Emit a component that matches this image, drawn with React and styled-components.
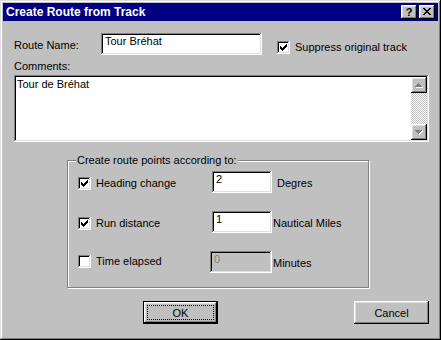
import React from 'react';
import styled, { createGlobalStyle } from 'styled-components';

const Global = createGlobalStyle`
  html, body {
    margin: 0;
    padding: 0;
    background: #c0c0c0;
  }
  * {
    box-sizing: border-box;
  }
`;

const raised = `
  background: #c0c0c0;
  box-shadow: inset -1px -1px #000, inset 1px 1px #fff, inset -2px -2px #808080, inset 2px 2px #dfdfdf;
`;

const sunken = `
  box-shadow: inset -1px -1px #fff, inset 1px 1px #808080, inset -2px -2px #dfdfdf, inset 2px 2px #000;
`;

const Window = styled.div`
  width: 441px;
  height: 340px;
  padding: 3px;
  display: flex;
  flex-direction: column;
  background: #c0c0c0;
  box-shadow: inset -1px -1px #000, inset 1px 1px #dfdfdf, inset -2px -2px #808080, inset 2px 2px #fff;
  font: 11px "Liberation Sans", Arial, sans-serif;
  color: #000;
`;

const TitleBar = styled.div`
  height: 18px;
  background: #000080;
  display: flex;
  align-items: center;
  justify-content: space-between;
  padding: 0 3px 0 3px;
`;

const Title = styled.div`
  color: #fff;
  font-weight: 700;
  font-size: 12px;
  line-height: 18px;
`;

const TitleButtons = styled.div`
  display: flex;
  gap: 2px;
`;

const TitleButton = styled.div`
  ${raised}
  width: 16px;
  height: 14px;
  display: flex;
  align-items: center;
  justify-content: center;
  font-weight: 700;
  font-size: 11px;
  line-height: 14px;
  padding-bottom: 1px;
`;

const Body = styled.div`
  padding: 12px 0 0 11px;
  display: flex;
  flex-direction: column;
`;

const NameRow = styled.div`
  display: flex;
  align-items: flex-start;
  height: 22px;
`;

const Label = styled.div`
  width: ${p => p.$width || 'auto'};
  line-height: 13px;
  padding-top: ${p => p.$top || 0}px;
  white-space: nowrap;
`;

const Field = styled.div`
  ${sunken}
  background: ${p => (p.$disabled ? '#c0c0c0' : '#fff')};
  color: ${p => (p.$disabled ? '#808080' : '#000')};
  width: ${p => p.$width}px;
  height: 22px;
  margin-left: ${p => p.$shift || 0}px;
  padding: 2px 4px;
  line-height: 13px;
  white-space: nowrap;
  flex: none;
`;

const Option = styled.label`
  display: flex;
  align-items: center;
  gap: 5px;
  width: ${p => (p.$width ? `${p.$width}px` : 'auto')};
  margin-left: ${p => p.$left || 0}px;
  margin-top: ${p => p.$top || 0}px;
  line-height: 13px;
  white-space: nowrap;
  flex: none;
`;

const Box = styled.span`
  ${sunken}
  display: block;
  width: 13px;
  height: 13px;
  background: #fff;
  flex: none;
`;

const Comments = styled.div`
  margin-top: 5px;
  line-height: 13px;
`;

const Memo = styled.div`
  ${sunken}
  margin-top: 2px;
  width: 415px;
  height: 67px;
  background: #fff;
  padding: 2px;
  display: flex;
`;

const MemoText = styled.div`
  flex: 1;
  padding: 1px 1px;
  line-height: 13px;
`;

const ScrollBar = styled.div`
  width: 16px;
  display: flex;
  flex-direction: column;
  justify-content: space-between;
  background: repeating-conic-gradient(#fff 0 25%, #c0c0c0 0 50%) 0 0 / 2px 2px;
`;

const ScrollButton = styled.div`
  ${raised}
  width: 16px;
  height: 16px;
  display: flex;
  align-items: center;
  justify-content: center;
`;

const Group = styled.fieldset`
  margin: 12px 0 0 53px;
  width: 302px;
  height: 134px;
  padding: 4px 0 0 10px;
  border: 1px solid #808080;
  box-shadow: inset 1px 1px #fff, 1px 1px #fff;
  display: flex;
  flex-direction: column;
  gap: 18px;
  min-inline-size: 0;
`;

const Legend = styled.legend`
  margin-left: -2px;
  padding: 0 1px;
  line-height: 13px;
  background: #c0c0c0;
`;

const PointRow = styled.div`
  display: flex;
  align-items: flex-start;
  height: 22px;
`;

const Unit = styled.div`
  margin-left: ${p => p.$gap}px;
  padding-top: 6px;
  line-height: 13px;
  white-space: nowrap;
`;

const Buttons = styled.div`
  display: flex;
  margin-top: 13px;
  padding-left: 129px;
  width: 415px;
`;

const Button = styled.div`
  ${raised}
  width: 75px;
  height: 23px;
  display: flex;
  align-items: center;
  justify-content: center;
  margin-left: ${p => (p.$right ? 'auto' : '0')};
  position: relative;
  ${p => p.$default && `
    box-shadow: inset 0 0 0 1px #000, inset -2px -2px #000, inset 2px 2px #fff, inset -3px -3px #808080, inset 3px 3px #dfdfdf;
  `}
`;

const Focus = styled.span`
  position: absolute;
  inset: 4px;
  border: 1px dotted #000;
`;

function Check({ on }) {
  return (
    <Box>
      {on && (
        <svg width="13" height="13" viewBox="0 0 13 13" shapeRendering="crispEdges">
          <path
            fill="#000"
            d="M9 3h1v1h-1z M8 4h2v1h-2z M3 5h1v1h-1z M7 5h3v1h-3z M3 6h2v1h-2z M6 6h3v1h-3z M3 7h5v1h-5z M4 8h3v1h-3z M5 9h1v1h-1z"
          />
        </svg>
      )}
    </Box>
  );
}

function CloseGlyph() {
  return (
    <svg width="8" height="7" viewBox="0 0 8 7" shapeRendering="crispEdges">
      <path
        fill="#000"
        d="M0 0h2v1h-2z M6 0h2v1h-2z M1 1h2v1h-2z M5 1h2v1h-2z M2 2h4v1h-4z M3 3h2v1h-2z M2 4h4v1h-4z M1 5h2v1h-2z M5 5h2v1h-2z M0 6h2v1h-2z M6 6h2v1h-2z"
      />
    </svg>
  );
}

function Arrow({ down }) {
  const d = down
    ? 'M0 0h7v1h-7z M1 1h5v1h-5z M2 2h3v1h-3z M3 3h1v1h-1z'
    : 'M3 0h1v1h-1z M2 1h3v1h-3z M1 2h5v1h-5z M0 3h7v1h-7z';
  return (
    <svg width="8" height="5" viewBox="0 0 8 5" shapeRendering="crispEdges">
      <path fill="#fff" transform="translate(1 1)" d={d} />
      <path fill="#808080" d={d} />
    </svg>
  );
}

const points = [
  { label: 'Heading change', on: true, value: '2', unit: 'Degres', gap: 5 },
  { label: 'Run distance', on: true, value: '1', unit: 'Nautical Miles', gap: 1 },
  { label: 'Time elapsed', on: false, value: '0', unit: 'Minutes', gap: 1, disabled: true },
];

export default function App() {
  return (
    <>
      <Global />
      <Window>
        <TitleBar>
          <Title>Create Route from Track</Title>
          <TitleButtons>
            <TitleButton>?</TitleButton>
            <TitleButton><CloseGlyph /></TitleButton>
          </TitleButtons>
        </TitleBar>
        <Body>
          <NameRow>
            <Label $width="87px" $top={6}>Route Name:</Label>
            <Field $width={161}>Tour Bréhat</Field>
            <Option $left={15} $top={8}>
              <Check on />
              Suppress original track
            </Option>
          </NameRow>
          <Comments>Comments:</Comments>
          <Memo>
            <MemoText>Tour de Bréhat</MemoText>
            <ScrollBar>
              <ScrollButton><Arrow /></ScrollButton>
              <ScrollButton><Arrow down /></ScrollButton>
            </ScrollBar>
          </Memo>
          <Group>
            <Legend>Create route points according to:</Legend>
            {points.map(p => (
              <PointRow key={p.label}>
                <Option $width={p.disabled ? 132 : 134} $top={p.disabled ? 4 : 6}>
                  <Check on={p.on} />
                  {p.label}
                </Option>
                <Field $width={p.disabled ? 62 : 60} $disabled={p.disabled}>{p.value}</Field>
                <Unit $gap={p.gap}>{p.unit}</Unit>
              </PointRow>
            ))}
          </Group>
          <Buttons>
            <Button $default>
              OK
              <Focus />
            </Button>
            <Button $right>Cancel</Button>
          </Buttons>
        </Body>
      </Window>
    </>
  );
}
